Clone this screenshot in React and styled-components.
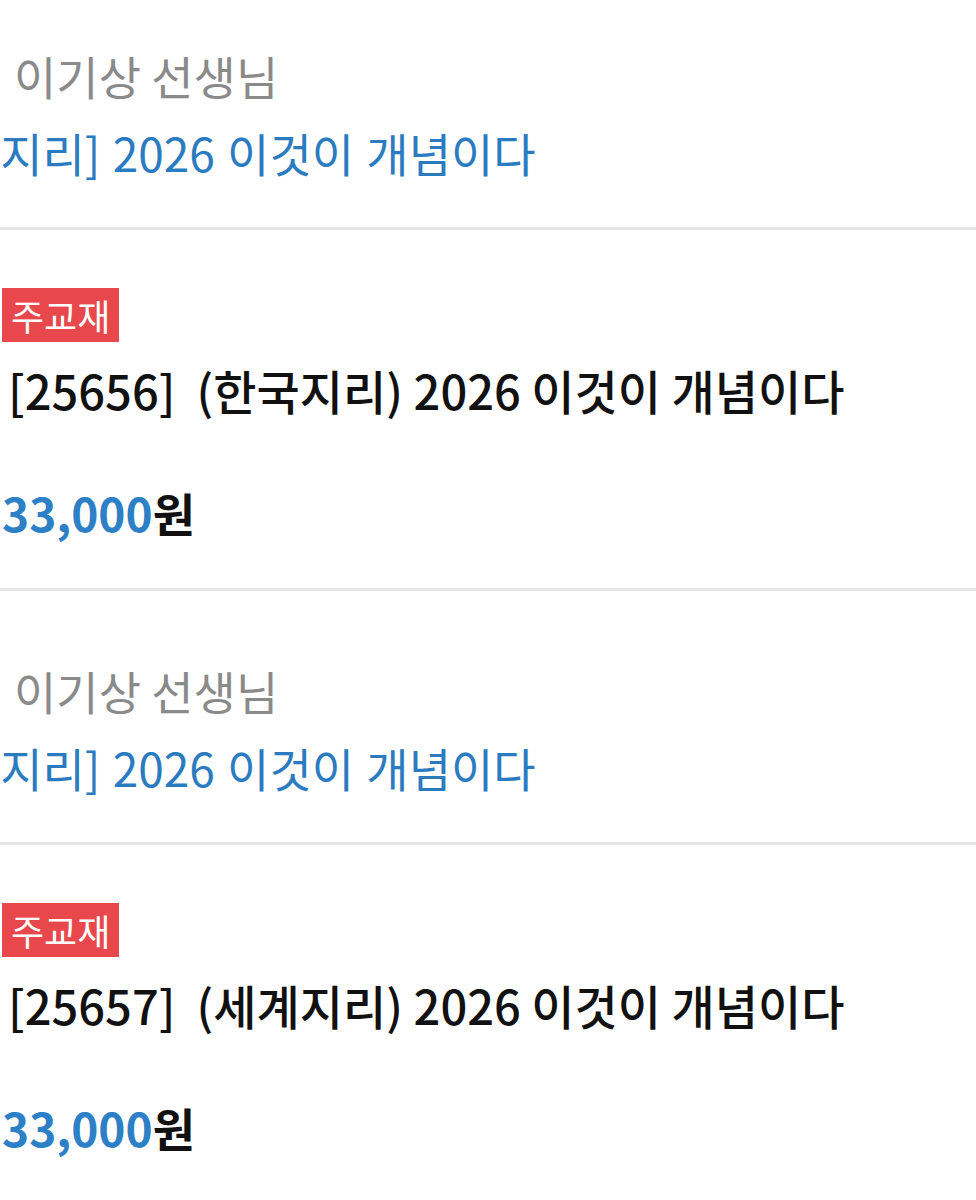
import React from 'react';
import styled, { createGlobalStyle } from 'styled-components';

const GlobalStyle = createGlobalStyle`
  html, body {
    margin: 0;
    padding: 0;
    background: #ffffff;
    overflow: hidden;
  }
  body {
    font-family: "Noto Sans CJK KR", "Noto Sans", sans-serif;
  }
`;

const items = [
  {
    teacher: '이기상 선생님',
    course: '[한국지리] 2026 이것이 개념이다',
    code: '25656',
    subject: '한국지리',
    book: '2026 이것이 개념이다',
    price: '33,000',
  },
  {
    teacher: '이기상 선생님',
    course: '[한국지리] 2026 이것이 개념이다',
    code: '25657',
    subject: '세계지리',
    book: '2026 이것이 개념이다',
    price: '33,000',
  },
];

function App() {
  return (
    <>
      <GlobalStyle />
      <List>
        {items.map((item) => (
          <Item key={item.code}>
            <Lecture>
              <Teacher>{item.teacher}</Teacher>
              <Course>{item.course}</Course>
            </Lecture>
            <Product>
              <Badge>주교재</Badge>
              <BookTitle>
                [{item.code}]&nbsp; ({item.subject}) {item.book}
              </BookTitle>
              <Price>
                <Amount>{item.price}</Amount>원
              </Price>
            </Product>
          </Item>
        ))}
      </List>
    </>
  );
}

export default App;

const List = styled.div`
  width: 976px;
  margin-top: -27px;
  overflow: hidden;
`;

const Item = styled.div`
  display: flex;
  flex-direction: column;
`;

const Lecture = styled.div`
  border-top: 3px solid #e6e6e6;
  padding: 61px 0 36px;
  display: flex;
  flex-direction: column;
`;

const Teacher = styled.div`
  font-size: 46px;
  line-height: 77px;
  color: #8a8a8a;
  padding-left: 14px;
  white-space: nowrap;
`;

const Course = styled.div`
  font-size: 46px;
  line-height: 77px;
  color: #2b7bc0;
  text-indent: -100px;
  word-spacing: 2px;
  white-space: nowrap;
`;

const Product = styled.div`
  border-top: 3px solid #e6e6e6;
  padding: 58px 0 46px;
  display: flex;
  flex-direction: column;
  align-items: flex-start;
`;

const Badge = styled.span`
  margin-left: 2px;
  height: 54px;
  padding: 0 9px;
  background: #e8474c;
  color: #ffffff;
  font-size: 36px;
  line-height: 54px;
`;

const BookTitle = styled.div`
  margin-top: 18px;
  padding-left: 8px;
  font-size: 47px;
  font-weight: 500;
  line-height: 60px;
  color: #111111;
  white-space: nowrap;
`;

const Price = styled.div`
  margin-top: 62px;
  padding-left: 2px;
  font-size: 46px;
  font-weight: 700;
  line-height: 60px;
  color: #111111;
`;

const Amount = styled.span`
  color: #2d7fc6;
  font-weight: 600;
`;
